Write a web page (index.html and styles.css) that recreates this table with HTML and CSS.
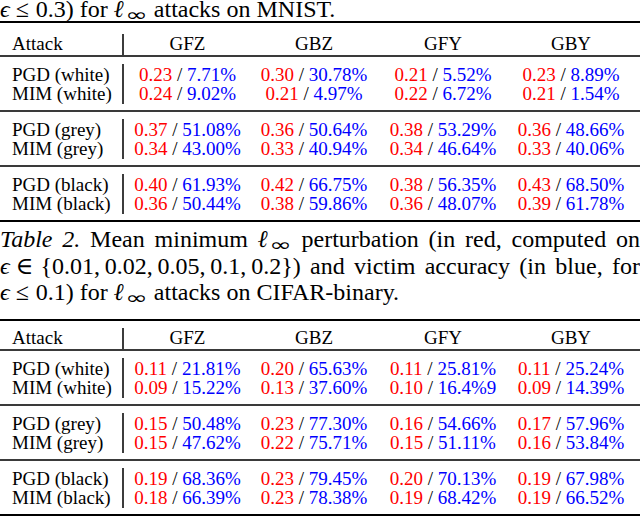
FILE: index.html
```html
<!DOCTYPE html>
<html>
<head>
<meta charset="utf-8">
<link rel="stylesheet" href="styles.css">
</head>
<body>
<div class="page">
  <div class="cap1"><span class="m">ϵ</span><span class="rel">≤</span>0.3) for <span class="li"><span class="m">ℓ</span><span class="inf">∞</span></span> attacks on MNIST.</div>

  <div class="tbl">
    <div class="rule thick"></div>
    <div class="grp head t1">
      <div class="lab">Attack</div>
      <div class="col">GFZ</div>
      <div class="col">GBZ</div>
      <div class="col">GFY</div>
      <div class="col">GBY</div>
    </div>
    <div class="rule mid"></div>
    <div class="grp body">
      <div class="lab"><div>PGD (white)</div><div>MIM (white)</div></div>
      <div class="col"><div><span class="r">0.23</span> / <span class="b">7.71%</span></div><div><span class="r">0.24</span> / <span class="b">9.02%</span></div></div>
      <div class="col"><div><span class="r">0.30</span> / <span class="b">30.78%</span></div><div><span class="r">0.21</span> / <span class="b">4.97%</span></div></div>
      <div class="col"><div><span class="r">0.21</span> / <span class="b">5.52%</span></div><div><span class="r">0.22</span> / <span class="b">6.72%</span></div></div>
      <div class="col"><div><span class="r">0.23</span> / <span class="b">8.89%</span></div><div><span class="r">0.21</span> / <span class="b">1.54%</span></div></div>
    </div>
    <div class="rule mid"></div>
    <div class="grp body">
      <div class="lab"><div>PGD (grey)</div><div>MIM (grey)</div></div>
      <div class="col"><div><span class="r">0.37</span> / <span class="b">51.08%</span></div><div><span class="r">0.34</span> / <span class="b">43.00%</span></div></div>
      <div class="col"><div><span class="r">0.36</span> / <span class="b">50.64%</span></div><div><span class="r">0.33</span> / <span class="b">40.94%</span></div></div>
      <div class="col"><div><span class="r">0.38</span> / <span class="b">53.29%</span></div><div><span class="r">0.34</span> / <span class="b">46.64%</span></div></div>
      <div class="col"><div><span class="r">0.36</span> / <span class="b">48.66%</span></div><div><span class="r">0.33</span> / <span class="b">40.06%</span></div></div>
    </div>
    <div class="rule mid"></div>
    <div class="grp body">
      <div class="lab"><div>PGD (black)</div><div>MIM (black)</div></div>
      <div class="col"><div><span class="r">0.40</span> / <span class="b">61.93%</span></div><div><span class="r">0.36</span> / <span class="b">50.44%</span></div></div>
      <div class="col"><div><span class="r">0.42</span> / <span class="b">66.75%</span></div><div><span class="r">0.38</span> / <span class="b">59.86%</span></div></div>
      <div class="col"><div><span class="r">0.38</span> / <span class="b">56.35%</span></div><div><span class="r">0.36</span> / <span class="b">48.07%</span></div></div>
      <div class="col"><div><span class="r">0.43</span> / <span class="b">68.50%</span></div><div><span class="r">0.39</span> / <span class="b">61.78%</span></div></div>
    </div>
    <div class="rule thick"></div>
  </div>

  <div class="cap2">
    <div class="jl"><i>Table 2.</i> Mean minimum <span class="li"><span class="m">ℓ</span><span class="inf">∞</span></span> perturbation (in red, computed on</div>
    <div class="jl"><span class="li"><span class="m">ϵ</span><span class="rel">∈</span>{0.01,&#8201;0.02,&#8201;0.05,&#8201;0.1,&#8201;0.2})</span> and victim accuracy (in blue, for</div>
    <div class="ll"><span class="m">ϵ</span><span class="rel">≤</span>0.1) for <span class="li"><span class="m">ℓ</span><span class="inf">∞</span></span> attacks on CIFAR-binary.</div>
  </div>

  <div class="tbl">
    <div class="rule thick"></div>
    <div class="grp head t2">
      <div class="lab">Attack</div>
      <div class="col">GFZ</div>
      <div class="col">GBZ</div>
      <div class="col">GFY</div>
      <div class="col">GBY</div>
    </div>
    <div class="rule mid"></div>
    <div class="grp body">
      <div class="lab"><div>PGD (white)</div><div>MIM (white)</div></div>
      <div class="col"><div><span class="r">0.11</span> / <span class="b">21.81%</span></div><div><span class="r">0.09</span> / <span class="b">15.22%</span></div></div>
      <div class="col"><div><span class="r">0.20</span> / <span class="b">65.63%</span></div><div><span class="r">0.13</span> / <span class="b">37.60%</span></div></div>
      <div class="col"><div><span class="r">0.11</span> / <span class="b">25.81%</span></div><div><span class="r">0.10</span> / <span class="b">16.4%9</span></div></div>
      <div class="col"><div><span class="r">0.11</span> / <span class="b">25.24%</span></div><div><span class="r">0.09</span> / <span class="b">14.39%</span></div></div>
    </div>
    <div class="rule mid"></div>
    <div class="grp body">
      <div class="lab"><div>PGD (grey)</div><div>MIM (grey)</div></div>
      <div class="col"><div><span class="r">0.15</span> / <span class="b">50.48%</span></div><div><span class="r">0.15</span> / <span class="b">47.62%</span></div></div>
      <div class="col"><div><span class="r">0.23</span> / <span class="b">77.30%</span></div><div><span class="r">0.22</span> / <span class="b">75.71%</span></div></div>
      <div class="col"><div><span class="r">0.16</span> / <span class="b">54.66%</span></div><div><span class="r">0.15</span> / <span class="b">51.11%</span></div></div>
      <div class="col"><div><span class="r">0.17</span> / <span class="b">57.96%</span></div><div><span class="r">0.16</span> / <span class="b">53.84%</span></div></div>
    </div>
    <div class="rule mid"></div>
    <div class="grp body">
      <div class="lab"><div>PGD (black)</div><div>MIM (black)</div></div>
      <div class="col"><div><span class="r">0.19</span> / <span class="b">68.36%</span></div><div><span class="r">0.18</span> / <span class="b">66.39%</span></div></div>
      <div class="col"><div><span class="r">0.23</span> / <span class="b">79.45%</span></div><div><span class="r">0.23</span> / <span class="b">78.38%</span></div></div>
      <div class="col"><div><span class="r">0.20</span> / <span class="b">70.13%</span></div><div><span class="r">0.19</span> / <span class="b">68.42%</span></div></div>
      <div class="col"><div><span class="r">0.19</span> / <span class="b">67.98%</span></div><div><span class="r">0.19</span> / <span class="b">66.52%</span></div></div>
    </div>
    <div class="rule thick"></div>
  </div>
</div>
</body>
</html>
```

FILE: styles.css
```css
html, body {
  margin: 0;
  padding: 0;
  background: #fff;
}

body {
  width: 640px;
  height: 516px;
  overflow: hidden;
  font-family: "Liberation Serif", "DejaVu Serif", serif;
  font-size: 19px;
  color: #000;
}

.page {
  width: 640px;
}

.m {
  font-style: italic;
}

.li {
  display: inline-block;
  white-space: nowrap;
}

.rel {
  margin: 0 7px 0 6px;
}

.inf {
  display: inline-block;
  font-family: "DejaVu Sans", sans-serif;
  font-size: 18px;
  line-height: 10px;
  vertical-align: -4px;
  transform: scaleX(1.5);
  margin: 0 4px 0 5px;
}

.cap1 {
  font-size: 24px;
  line-height: 24px;
  margin-top: -3px;
  white-space: nowrap;
}

.cap2 {
  font-size: 24px;
  padding-top: 4px;
  margin-bottom: 13px;
  line-height: 26.5px;
}

.jl {
  text-align: justify;
  text-align-last: justify;
  white-space: nowrap;
}

.ll {
  text-align: left;
  white-space: nowrap;
}

.rule {
  width: 640px;
}

.rule.thick {
  height: 2px;
  background: #000;
}

.rule.mid {
  height: 2px;
  background: #3a3a3a;
}

.grp {
  display: grid;
  grid-template-columns: 124px 127px 126px 132px 124px;
  line-height: 19px;
}

.lab {
  box-sizing: border-box;
  padding-left: 12px;
  border-right: 2px solid #3c3c3c;
  white-space: nowrap;
}

.col {
  text-align: center;
  white-space: nowrap;
}

.head.t1 {
  padding-top: 11px;
}

.head.t2 {
  padding-top: 7px;
}

.head .lab {
  padding-bottom: 2px;
}

.body {
  padding: 7px 0 6px;
}

.body .lab,
.body .col {
  padding-top: 1px;
  padding-bottom: 1px;
}

.r {
  color: #ff0000;
}

.b {
  color: #0000ff;
}
```
